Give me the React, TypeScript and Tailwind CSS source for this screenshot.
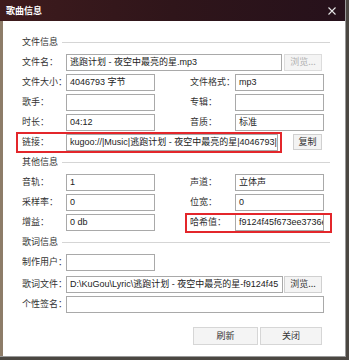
import React from 'react';

const inputBase =
  "h-[17px] shrink-0 border border-[#a9a9a9] bg-white px-[3px] font-['Liberation_Sans','Noto_Sans_CJK_SC',sans-serif] text-[9px] leading-[15px] text-[#222] overflow-hidden whitespace-nowrap";

function Field({ value = '', w }: { value?: string; w: string }) {
  return <div className={`${inputBase} ${w}`}>{value}</div>;
}

function LeftLabel({ children }: { children: React.ReactNode }) {
  return <span className="w-[44px] shrink-0 whitespace-nowrap">{children}</span>;
}

function RightLabel({ children }: { children: React.ReactNode }) {
  return <span className="ml-[35px] w-[45px] shrink-0 whitespace-nowrap">{children}</span>;
}

function GroupTitle({ title }: { title: string }) {
  return (
    <div className="flex h-5 items-center pr-[15px]">
      <span className="shrink-0">{title}</span>
      <div className="ml-[4px] h-px flex-1 bg-[#d5d5d5]" />
    </div>
  );
}

function PairRow({
  l,
  lv,
  r,
  rv,
}: {
  l: string;
  lv?: string;
  r: string;
  rv?: string;
}) {
  return (
    <div className="flex h-5 items-center">
      <LeftLabel>{l}</LeftLabel>
      <Field value={lv} w="w-[89px]" />
      <RightLabel>{r}</RightLabel>
      <Field value={rv} w="w-[89px]" />
    </div>
  );
}

export default function App() {
  return (
    <div className="h-[360px] w-[349px] bg-[#4b4742] font-['Noto_Sans_CJK_SC',sans-serif] text-[9px] text-[#333]">
      <div className="flex h-[357px] w-[346px] flex-col border-r border-b border-[#9a9a9a]">
        {/* title bar */}
        <div className="flex h-[21px] shrink-0 items-center justify-between bg-gradient-to-r from-[#3e1b1d] via-[#2f151a] to-[#26111b] pl-[6px] pr-[9px]">
          <span className="text-[9px] font-bold text-white">歌曲信息</span>
          <svg width="8" height="8" viewBox="0 0 8 8" className="text-[#e6e6e6]">
            <path d="M0.5 0.5 L7.5 7.5 M7.5 0.5 L0.5 7.5" stroke="currentColor" strokeWidth="1.1" />
          </svg>
        </div>

        {/* body */}
        <div className="flex flex-1 border-l-[3px] border-[#8d7c68]">
          <div className="flex-1 bg-white pl-[19px] pt-[11px]">
            <GroupTitle title="文件信息" />

            <div className="flex h-5 items-center">
              <LeftLabel>文件名：</LeftLabel>
              <Field value="逃跑计划 - 夜空中最亮的星.mp3" w="w-[216px]" />
              <div className="ml-[2px] flex h-[17px] w-[38px] items-center justify-center border border-[#dcdcdc] bg-[#f4f4f4] text-[#b0b0b0]">
                浏览...
              </div>
            </div>

            <PairRow l="文件大小：" lv="4046793 字节" r="文件格式：" rv="mp3" />
            <PairRow l="歌手：" r="专辑：" />
            <PairRow l="时长：" lv="04:12" r="音质：" rv="标准" />

            <div className="relative flex h-5 items-center">
              <LeftLabel>链接：</LeftLabel>
              <Field value="kugoo://|Music|逃跑计划 - 夜空中最亮的星|4046793|f9124f45" w="w-[212px]" />
              <div className="ml-[15px] flex h-[16px] w-[29px] items-center justify-center border border-[#d0d0d0] bg-[#f3f3f3] text-[#333]">
                复制
              </div>
              <div className="pointer-events-none absolute left-[-6px] top-0 h-[21px] w-[266px] border-2 border-[#e3262b]" />
            </div>

            <GroupTitle title="其他信息" />
            <PairRow l="音轨：" lv="1" r="声道：" rv="立体声" />
            <PairRow l="采样率：" lv="0" r="位宽：" rv="0" />

            <div className="relative flex h-5 items-center">
              <LeftLabel>增益：</LeftLabel>
              <Field value="0 db" w="w-[89px]" />
              <RightLabel>哈希值：</RightLabel>
              <Field value="f9124f45f673ee3736e15" w="w-[89px]" />
              <div className="pointer-events-none absolute left-[163px] top-[1px] h-[20px] w-[147px] border-2 border-[#e3262b]" />
            </div>

            <GroupTitle title="歌词信息" />
            <div className="flex h-5 items-center">
              <LeftLabel>制作用户：</LeftLabel>
              <Field w="w-[89px]" />
            </div>
            <div className="mt-[2px] flex h-5 items-center">
              <LeftLabel>歌词文件：</LeftLabel>
              <Field value="D:\KuGou\Lyric\逃跑计划 - 夜空中最亮的星-f9124f45" w="w-[217px]" />
              <div className="ml-[1px] flex h-[17px] w-[38px] items-center justify-center border border-[#d0d0d0] bg-[#f4f4f4] text-[#333]">
                浏览...
              </div>
            </div>
            <div className="flex h-5 items-center">
              <LeftLabel>个性签名：</LeftLabel>
              <Field w="w-[258px]" />
            </div>

            <div className="mt-[13px] flex gap-[2px] pl-[171px]">
              <div className="flex h-[18px] w-[65px] items-center justify-center border border-[#d6d6d6] bg-[#f4f4f4]">
                刷新
              </div>
              <div className="flex h-[18px] w-[62px] items-center justify-center border border-[#d6d6d6] bg-[#f4f4f4]">
                关闭
              </div>
            </div>
          </div>
        </div>
      </div>
    </div>
  );
}
